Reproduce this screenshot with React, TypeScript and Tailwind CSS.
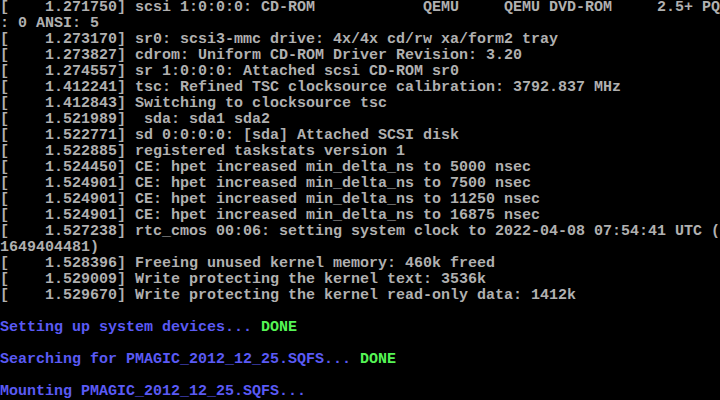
const lines: { text: string; done?: boolean; blue?: boolean }[] = [
  { text: "[    1.271750] scsi 1:0:0:0: CD-ROM            QEMU     QEMU DVD-ROM     2.5+ PQ" },
  { text: ": 0 ANSI: 5" },
  { text: "[    1.273170] sr0: scsi3-mmc drive: 4x/4x cd/rw xa/form2 tray" },
  { text: "[    1.273827] cdrom: Uniform CD-ROM Driver Revision: 3.20" },
  { text: "[    1.274557] sr 1:0:0:0: Attached scsi CD-ROM sr0" },
  { text: "[    1.412241] tsc: Refined TSC clocksource calibration: 3792.837 MHz" },
  { text: "[    1.412843] Switching to clocksource tsc" },
  { text: "[    1.521989]  sda: sda1 sda2" },
  { text: "[    1.522771] sd 0:0:0:0: [sda] Attached SCSI disk" },
  { text: "[    1.522885] registered taskstats version 1" },
  { text: "[    1.524450] CE: hpet increased min_delta_ns to 5000 nsec" },
  { text: "[    1.524901] CE: hpet increased min_delta_ns to 7500 nsec" },
  { text: "[    1.524901] CE: hpet increased min_delta_ns to 11250 nsec" },
  { text: "[    1.524901] CE: hpet increased min_delta_ns to 16875 nsec" },
  { text: "[    1.527238] rtc_cmos 00:06: setting system clock to 2022-04-08 07:54:41 UTC (" },
  { text: "1649404481)" },
  { text: "[    1.528396] Freeing unused kernel memory: 460k freed" },
  { text: "[    1.529009] Write protecting the kernel text: 3536k" },
  { text: "[    1.529670] Write protecting the kernel read-only data: 1412k" },
  { text: "" },
  { text: "Setting up system devices... ", blue: true, done: true },
  { text: "" },
  { text: "Searching for PMAGIC_2012_12_25.SQFS... ", blue: true, done: true },
  { text: "" },
  { text: "Mounting PMAGIC_2012_12_25.SQFS...", blue: true },
];

export default function App() {
  return (
    <div className="w-[720px] h-[400px] bg-black overflow-hidden font-['Liberation_Mono',monospace] text-[15px] leading-[16px] font-bold">
      {lines.map((l, i) => (
        <div key={i} className="h-4 whitespace-pre">
          <span className={l.blue ? "text-[#5a5af5]" : "text-[#b0b0b0]"}>{l.text}</span>
          {l.done && <span className="text-[#55f555]">DONE</span>}
        </div>
      ))}
    </div>
  );
}
